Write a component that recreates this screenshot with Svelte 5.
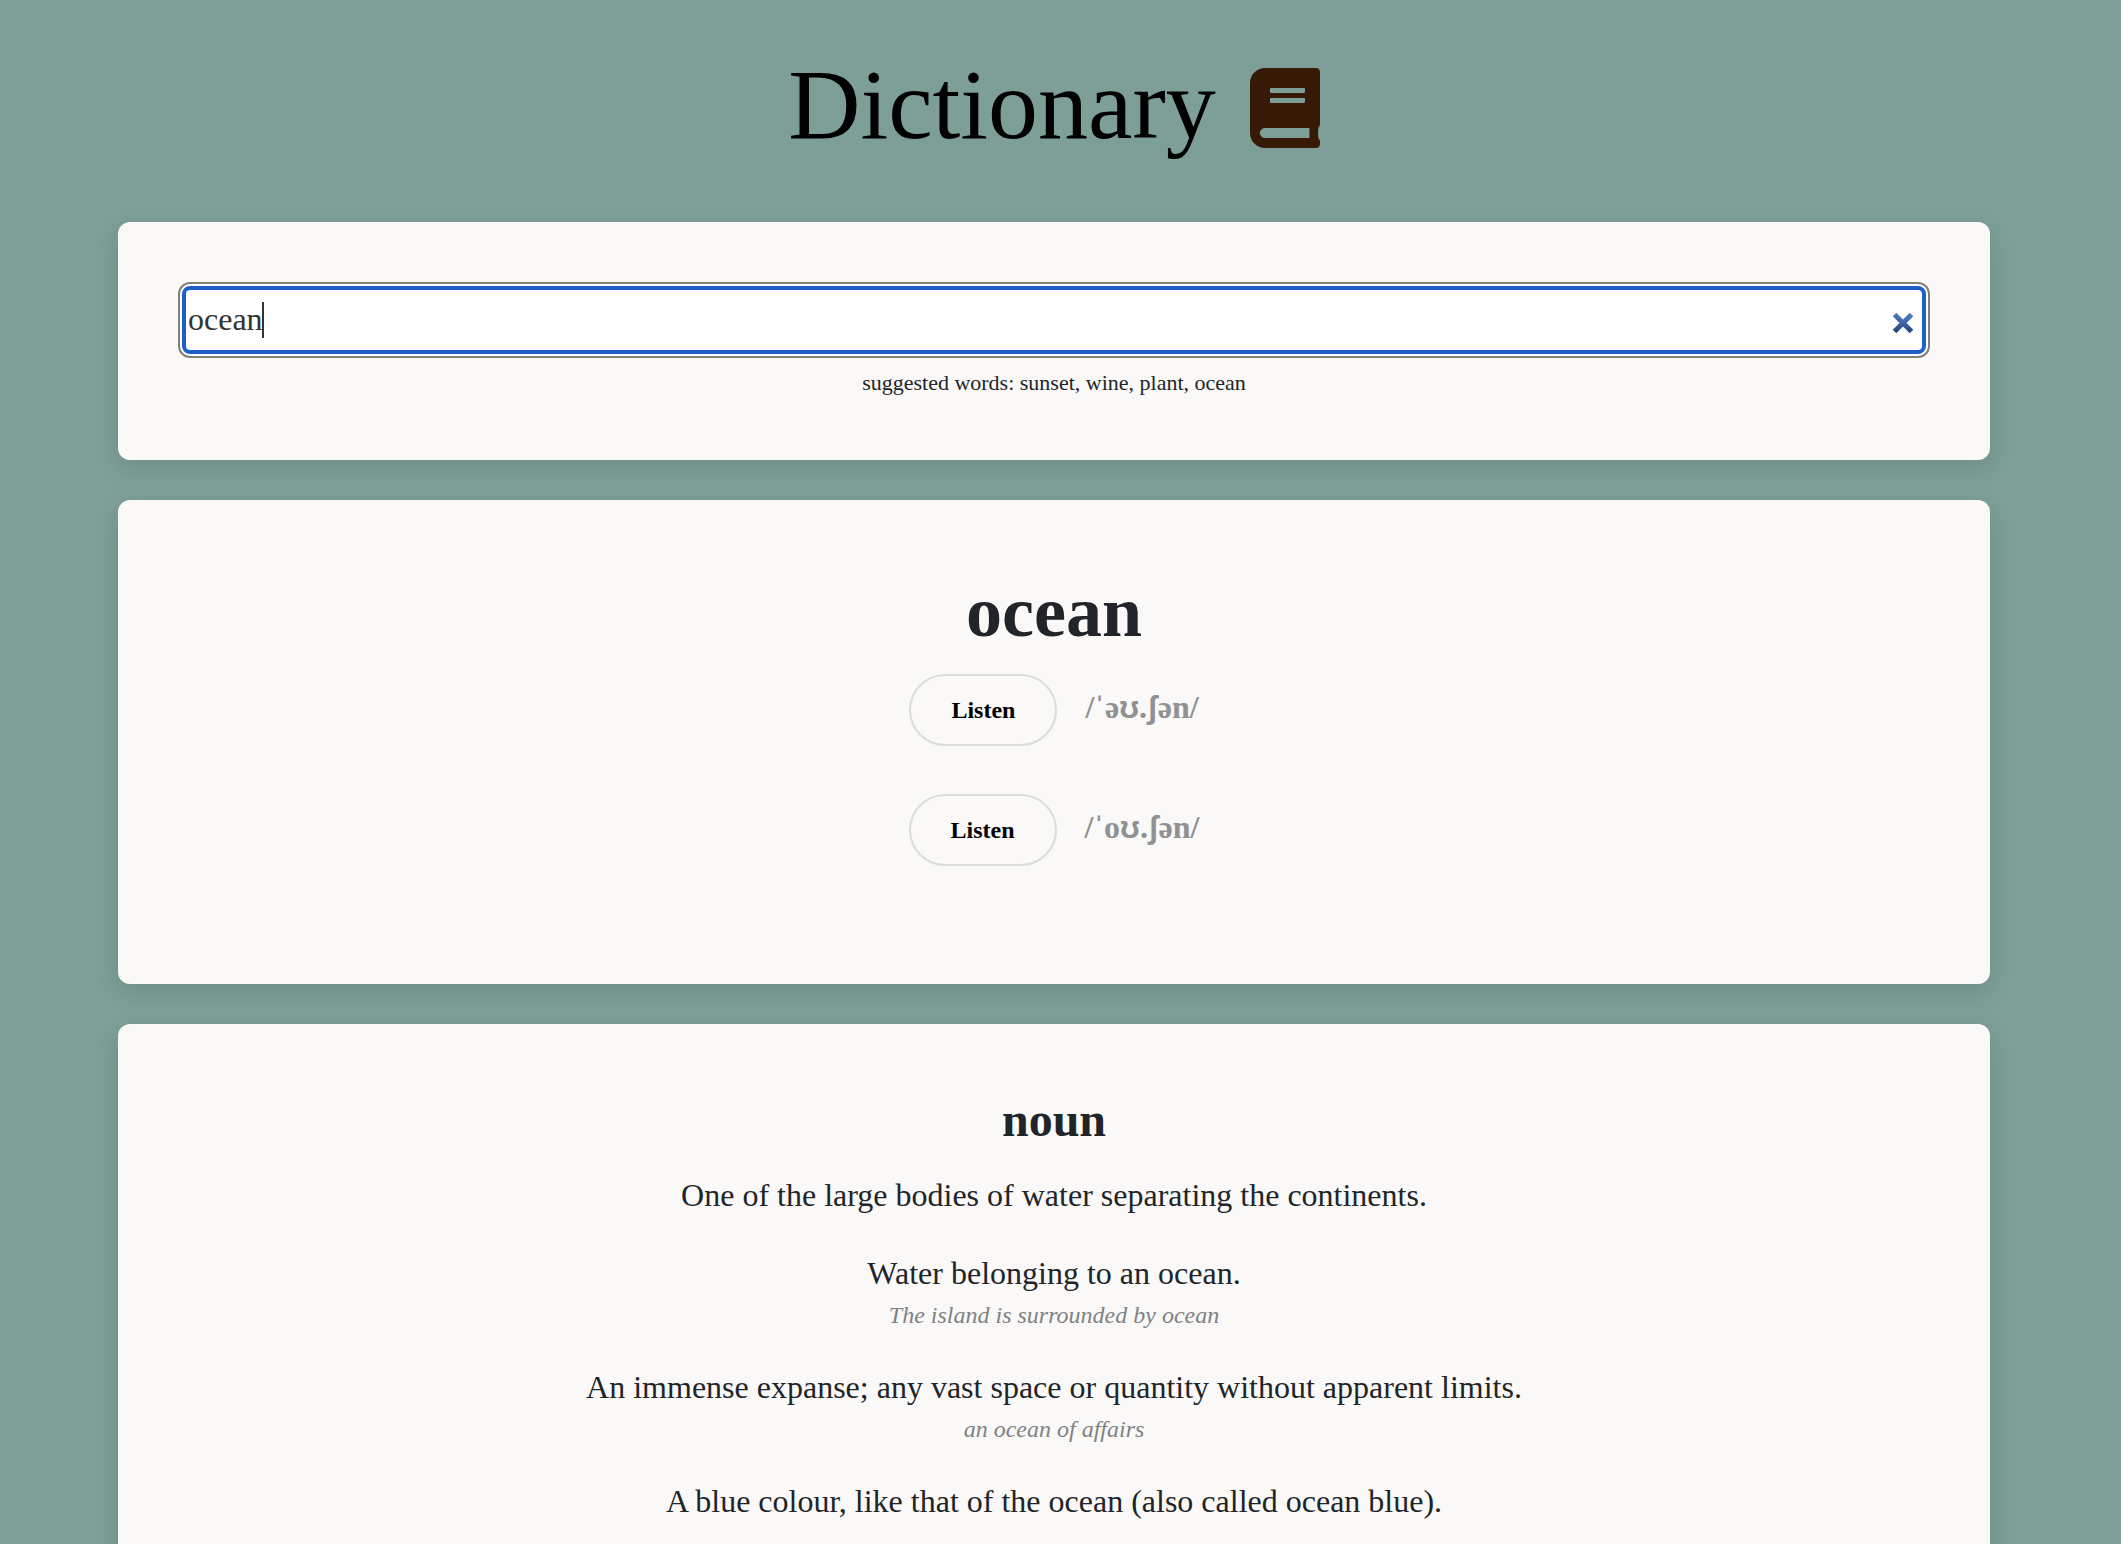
<script>
  let query = $state('ocean');

  // Each transcription is split so that the IPA-only symbols can use the sans face.
  const phonetics = [
    [
      { text: '/' },
      { text: 'ˈ', symbol: true },
      { text: 'ə' },
      { text: 'ʊ', symbol: true },
      { text: '.' },
      { text: 'ʃ', symbol: true },
      { text: 'ən/' }
    ],
    [
      { text: '/' },
      { text: 'ˈ', symbol: true },
      { text: 'o' },
      { text: 'ʊ', symbol: true },
      { text: '.' },
      { text: 'ʃ', symbol: true },
      { text: 'ən/' }
    ]
  ];

  const definitions = [
    { text: 'One of the large bodies of water separating the continents.' },
    { text: 'Water belonging to an ocean.', example: 'The island is surrounded by ocean' },
    {
      text: 'An immense expanse; any vast space or quantity without apparent limits.',
      example: 'an ocean of affairs'
    },
    { text: 'A blue colour, like that of the ocean (also called ocean blue).' }
  ];
</script>

<div class="page">
  <header>
    <h1>
      Dictionary<svg class="book" viewBox="0 0 448 512" aria-hidden="true">
        <path
          d="M448 360V24c0-13.3-10.7-24-24-24H96C43 0 0 43 0 96v320c0 53 43 96 96 96h328c13.3 0 24-10.7 24-24v-16c0-7.5-3.5-14.3-8.9-18.7-4.2-15.4-4.2-59.3 0-74.7 5.4-4.3 8.9-11.1 8.9-18.6zM128 134c0-3.3 2.7-6 6-6h212c3.3 0 6 2.7 6 6v20c0 3.3-2.7 6-6 6H134c-3.3 0-6-2.7-6-6v-20zm0 64c0-3.3 2.7-6 6-6h212c3.3 0 6 2.7 6 6v20c0 3.3-2.7 6-6 6H134c-3.3 0-6-2.7-6-6v-20zm253.4 250H96c-17.7 0-32-14.3-32-32 0-17.6 14.4-32 32-32h285.4c-1.9 17.1-1.9 46.9 0 64z"
        />
      </svg>
    </h1>
  </header>

  <main>
    <section class="card search">
      <form class="field" onsubmit={(e) => e.preventDefault()}>
        <input type="text" aria-label="Search for a word" autocomplete="off" bind:value={query} />
        <span class="caret"></span>
        <button class="clear" type="button" aria-label="Clear" onclick={() => (query = '')}>
          <svg viewBox="0 0 22 22" aria-hidden="true">
            <defs>
              <linearGradient id="cross" gradientUnits="userSpaceOnUse" x1="0" y1="0" x2="0" y2="22">
                <stop offset="0" stop-color="#4f82c8" />
                <stop offset="0.5" stop-color="#3f62a8" />
                <stop offset="1" stop-color="#243c6c" />
              </linearGradient>
            </defs>
            <path d="M2.5 2.5L19.5 19.5M19.5 2.5L2.5 19.5" stroke="url(#cross)" stroke-width="5" />
          </svg>
        </button>
      </form>
      <p class="hint">suggested words: sunset, wine, plant, ocean</p>
    </section>

    <section class="card word">
      <h2>ocean</h2>
      <ul class="phonetics">
        {#each phonetics as phonetic}
          <li>
            <button class="listen" type="button">Listen</button>
            <span class="ipa">{#each phonetic as part}<span class:symbol={part.symbol}>{part.text}</span>{/each}</span>
          </li>
        {/each}
      </ul>
    </section>

    <section class="card meaning">
      <h3>noun</h3>
      <ul class="definitions">
        {#each definitions as definition}
          <li>
            <p>{definition.text}</p>
            {#if definition.example}
              <p class="example">{definition.example}</p>
            {/if}
          </li>
        {/each}
      </ul>
    </section>
  </main>
</div>

<style>
  :global(body) {
    background: #7d9f97;
  }

  .page {
    box-sizing: border-box;
    padding: 45px 131px 40px 118px;
    color: #212529;
    font-family: 'Liberation Serif', 'Times New Roman', serif;
    text-align: center;
  }

  h1,
  h2,
  h3,
  p,
  ul {
    margin: 0;
    padding: 0;
  }

  ul {
    list-style: none;
  }

  h1 {
    color: #000;
    font-size: 100px;
    font-weight: 400;
    line-height: 120px;
  }

  .book {
    width: 70px;
    height: 80px;
    margin-left: 34px;
    vertical-align: -10px;
    fill: #361a06;
  }

  main {
    display: flex;
    flex-direction: column;
    gap: 40px;
    margin-top: 57px;
  }

  .card {
    padding: 60px;
    border-radius: 12px;
    background: #faf9f7;
    box-shadow: 0 8px 24px rgba(0, 0, 0, 0.12);
  }

  .field {
    position: relative;
    display: flex;
    box-sizing: border-box;
    height: 76px;
    padding: 2px;
    border: 2px solid #808080;
    border-radius: 12px;
    background: #fff;
  }

  input {
    flex: 1;
    min-width: 0;
    padding: 0 48px 2px 2px;
    border: 4px solid #1d5fc9;
    border-radius: 8px;
    outline: none;
    background: #fff;
    color: #333;
    font: 32px 'Liberation Serif', 'Times New Roman', serif;
  }

  .caret {
    position: absolute;
    top: 18px;
    left: 82px;
    width: 2px;
    height: 36px;
    background: #333;
  }

  .clear {
    position: absolute;
    top: 28px;
    right: 14px;
    display: flex;
    padding: 0;
    border: 0;
    background: none;
    cursor: pointer;
  }

  .clear svg {
    width: 22px;
    height: 22px;
  }

  .hint {
    margin-top: 8px;
    font-size: 22px;
    line-height: 34px;
  }

  .word {
    padding: 69px 60px 118px;
  }

  h2 {
    font-size: 72px;
    line-height: 86px;
  }

  .phonetics {
    display: flex;
    flex-direction: column;
    gap: 48px;
    margin-top: 19px;
  }

  .phonetics li {
    display: flex;
    justify-content: center;
    align-items: baseline;
    gap: 28px;
    height: 72px;
  }

  .listen {
    box-sizing: border-box;
    width: 148px;
    height: 72px;
    padding: 0;
    border: 2px solid #dcdcda;
    border-radius: 36px;
    background: transparent;
    color: #000;
    font: bold 24px 'Liberation Serif', 'Times New Roman', serif;
    cursor: pointer;
  }

  .ipa {
    color: #8f9192;
    font-size: 32px;
    font-weight: 700;
    line-height: 48px;
  }

  .symbol {
    font-family: 'Liberation Sans', Arial, sans-serif;
  }

  .meaning {
    padding-top: 67px;
  }

  h3 {
    font-size: 48px;
    line-height: 58px;
  }

  .definitions {
    display: flex;
    flex-direction: column;
    gap: 30px;
    margin-top: 22px;
    font-size: 32px;
    line-height: 48px;
  }

  .example {
    color: #7f8283;
    font-size: 24px;
    font-style: italic;
    line-height: 36px;
  }
</style>
